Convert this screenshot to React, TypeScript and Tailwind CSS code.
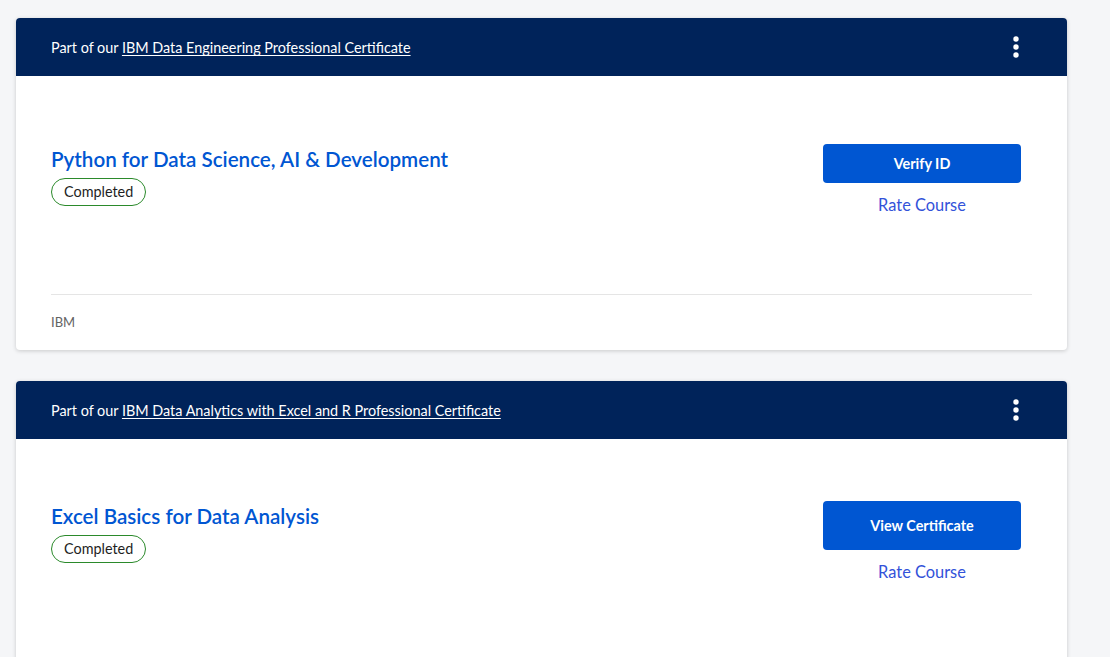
const courses = [
  {
    cert: 'IBM Data Engineering Professional Certificate',
    title: 'Python for Data Science, AI & Development',
    action: 'Verify ID',
    btnClass: 'h-[39px]',
    rowClass: 'pt-[68px]',
  },
  {
    cert: 'IBM Data Analytics with Excel and R Professional Certificate',
    title: 'Excel Basics for Data Analysis',
    action: 'View Certificate',
    btnClass: 'h-[49px]',
    rowClass: 'pt-[62px]',
  },
];

function MoreDots() {
  return (
    <svg width="8" height="24" viewBox="0 0 8 24" fill="white">
      <circle cx="4" cy="4" r="2.7" />
      <circle cx="4" cy="12" r="2.7" />
      <circle cx="4" cy="20" r="2.7" />
    </svg>
  );
}

function CourseCard({ course }: { course: (typeof courses)[number] }) {
  return (
    <div className="bg-white rounded-[4px] shadow-[0_1px_4px_rgba(0,0,0,0.18)] overflow-hidden">
      {/* header */}
      <div className="h-[58px] bg-[#00235a] flex items-center justify-between pl-[35px] pr-[47px] text-white">
        <p className="text-[14.4px] leading-none pt-[3px]">
          Part of our <a href="#" className="underline underline-offset-2">{course.cert}</a>
        </p>
        <MoreDots />
      </div>

      {/* body */}
      <div className="px-[35px]">
        <div className={`h-[218px] flex justify-between items-start ${course.rowClass}`}>
          <div className="pt-[3px]">
            <h2 className="text-[20.6px] leading-[24px] font-semibold text-[#0056d2]">{course.title}</h2>
            <span className="inline-block mt-[7px] px-[12px] h-[28px] leading-[26px] rounded-full border border-[#2b8a2b] text-[14.4px] text-[#1f1f1f]">
              Completed
            </span>
          </div>
          <div className="w-[198px] mr-[11px] flex flex-col items-center">
            <button className={`w-full ${course.btnClass} rounded-[4px] bg-[#0056d2] text-white text-[14.4px] font-bold`}>
              {course.action}
            </button>
            <a href="#" className="mt-[10px] text-[16.4px] leading-[24px] text-[#3352d9]">
              Rate Course
            </a>
          </div>
        </div>
        <div className="border-t border-[#e5e5e5] h-[56px] flex items-center">
          <span className="text-[13px] text-[#636363]">IBM</span>
        </div>
      </div>
    </div>
  );
}

export default function App() {
  return (
    <main className="min-h-screen bg-[#f5f6f8] pt-[18px] pl-[16px] pr-[43px] font-['Lato','Open_Sans',sans-serif]">
      <div className="flex flex-col gap-[31px]">
        {courses.map((c, i) => (
          <CourseCard key={i} course={c} />
        ))}
      </div>
    </main>
  );
}
